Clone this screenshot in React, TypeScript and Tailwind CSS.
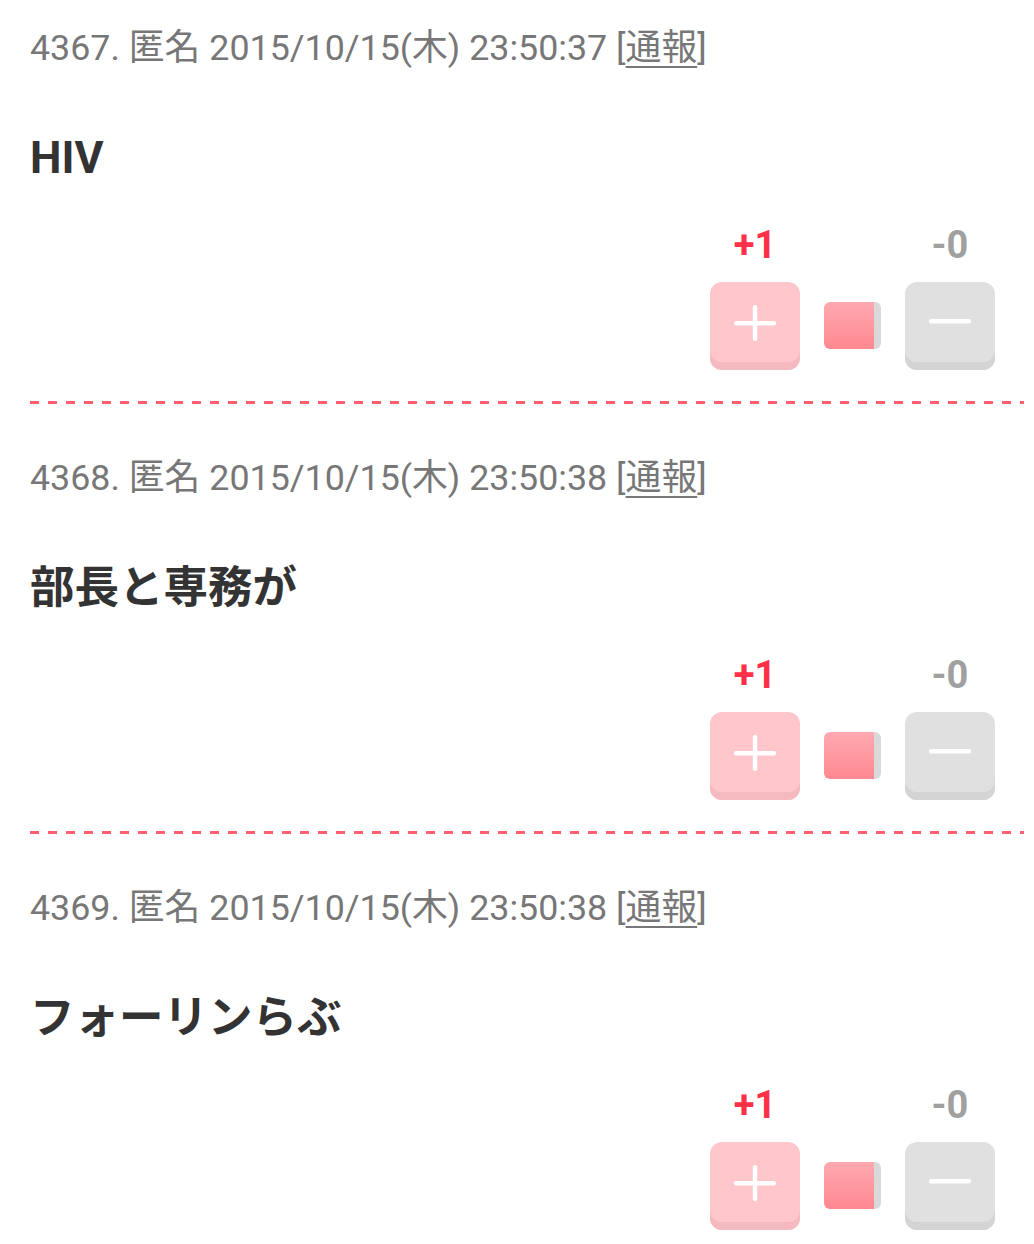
const POSTS = [
  { no: 4367, time: "23:50:37", body: "HIV" },
  { no: 4368, time: "23:50:38", body: "部長と専務が" },
  { no: 4369, time: "23:50:38", body: "フォーリンらぶ" },
];

const FONT = "font-['Roboto','Noto_Sans_CJK_JP',sans-serif]";

function VoteRow() {
  return (
    <div className="flex items-end justify-end pr-[29px]">
      <div className="flex w-[90px] flex-col items-center">
        <span className="h-[40px] text-[38px] font-bold leading-[40px] text-[#ff3047]">+1</span>
        <button
          type="button"
          className="mt-[17px] flex h-[88px] w-[90px] items-center justify-center rounded-[12px] bg-[#ffc6cc] shadow-[inset_0_-8px_0_#f5babf]"
        >
          <svg width="42" height="36" viewBox="0 0 42 36" className="-mt-[6px]">
            <rect x="0" y="16" width="42" height="4.5" rx="2" fill="#fff" />
            <rect x="18.75" y="0" width="4.5" height="36" rx="2" fill="#fff" />
          </svg>
        </button>
      </div>
      <div className="mx-[24px] mb-[21px] flex h-[47px] w-[57px] overflow-hidden rounded-[6px]">
        <div className="flex-1 bg-[linear-gradient(180deg,#ffa9b0,#ff8891)]" />
        <div className="w-[7px] bg-[#d9d9d9]" />
      </div>
      <div className="flex w-[90px] flex-col items-center">
        <span className="h-[40px] text-[38px] font-bold leading-[40px] text-[#a0a0a0]">-0</span>
        <button
          type="button"
          className="mt-[17px] flex h-[88px] w-[90px] items-center justify-center rounded-[12px] bg-[#e0e0e0] shadow-[inset_0_-8px_0_#d4d4d4]"
        >
          <svg width="42" height="5" viewBox="0 0 42 5" className="-mt-[9px]">
            <rect x="0" y="0" width="42" height="4.5" rx="2" fill="#fff" />
          </svg>
        </button>
      </div>
    </div>
  );
}

export default function App() {
  return (
    <div className={`min-h-[1244px] bg-white pl-[30px] pr-[10px] pt-[24px] ${FONT}`}>
      {POSTS.map((post, i) => (
        <div key={post.no}>
          <div className="h-[48px] whitespace-nowrap text-[35.8px] leading-[48px] text-[#777]">
            {post.no}. 匿名 2015/10/15(木) {post.time} [<span className="underline decoration-[2px] underline-offset-[6px]">通報</span>]
          </div>
          <div className="mt-[56px] h-[60px] text-[44.5px] font-bold leading-[60px] text-[#333]">
            {post.body}
          </div>
          <div className="mt-[37px]">
            <VoteRow />
          </div>
          {i < POSTS.length - 1 ? (
            <div className="mb-[50px] mt-[31px] h-[3px] bg-[repeating-linear-gradient(90deg,#ff5f6e_0_9px,transparent_9px_18px)]" />
          ) : null}
        </div>
      ))}
    </div>
  );
}
